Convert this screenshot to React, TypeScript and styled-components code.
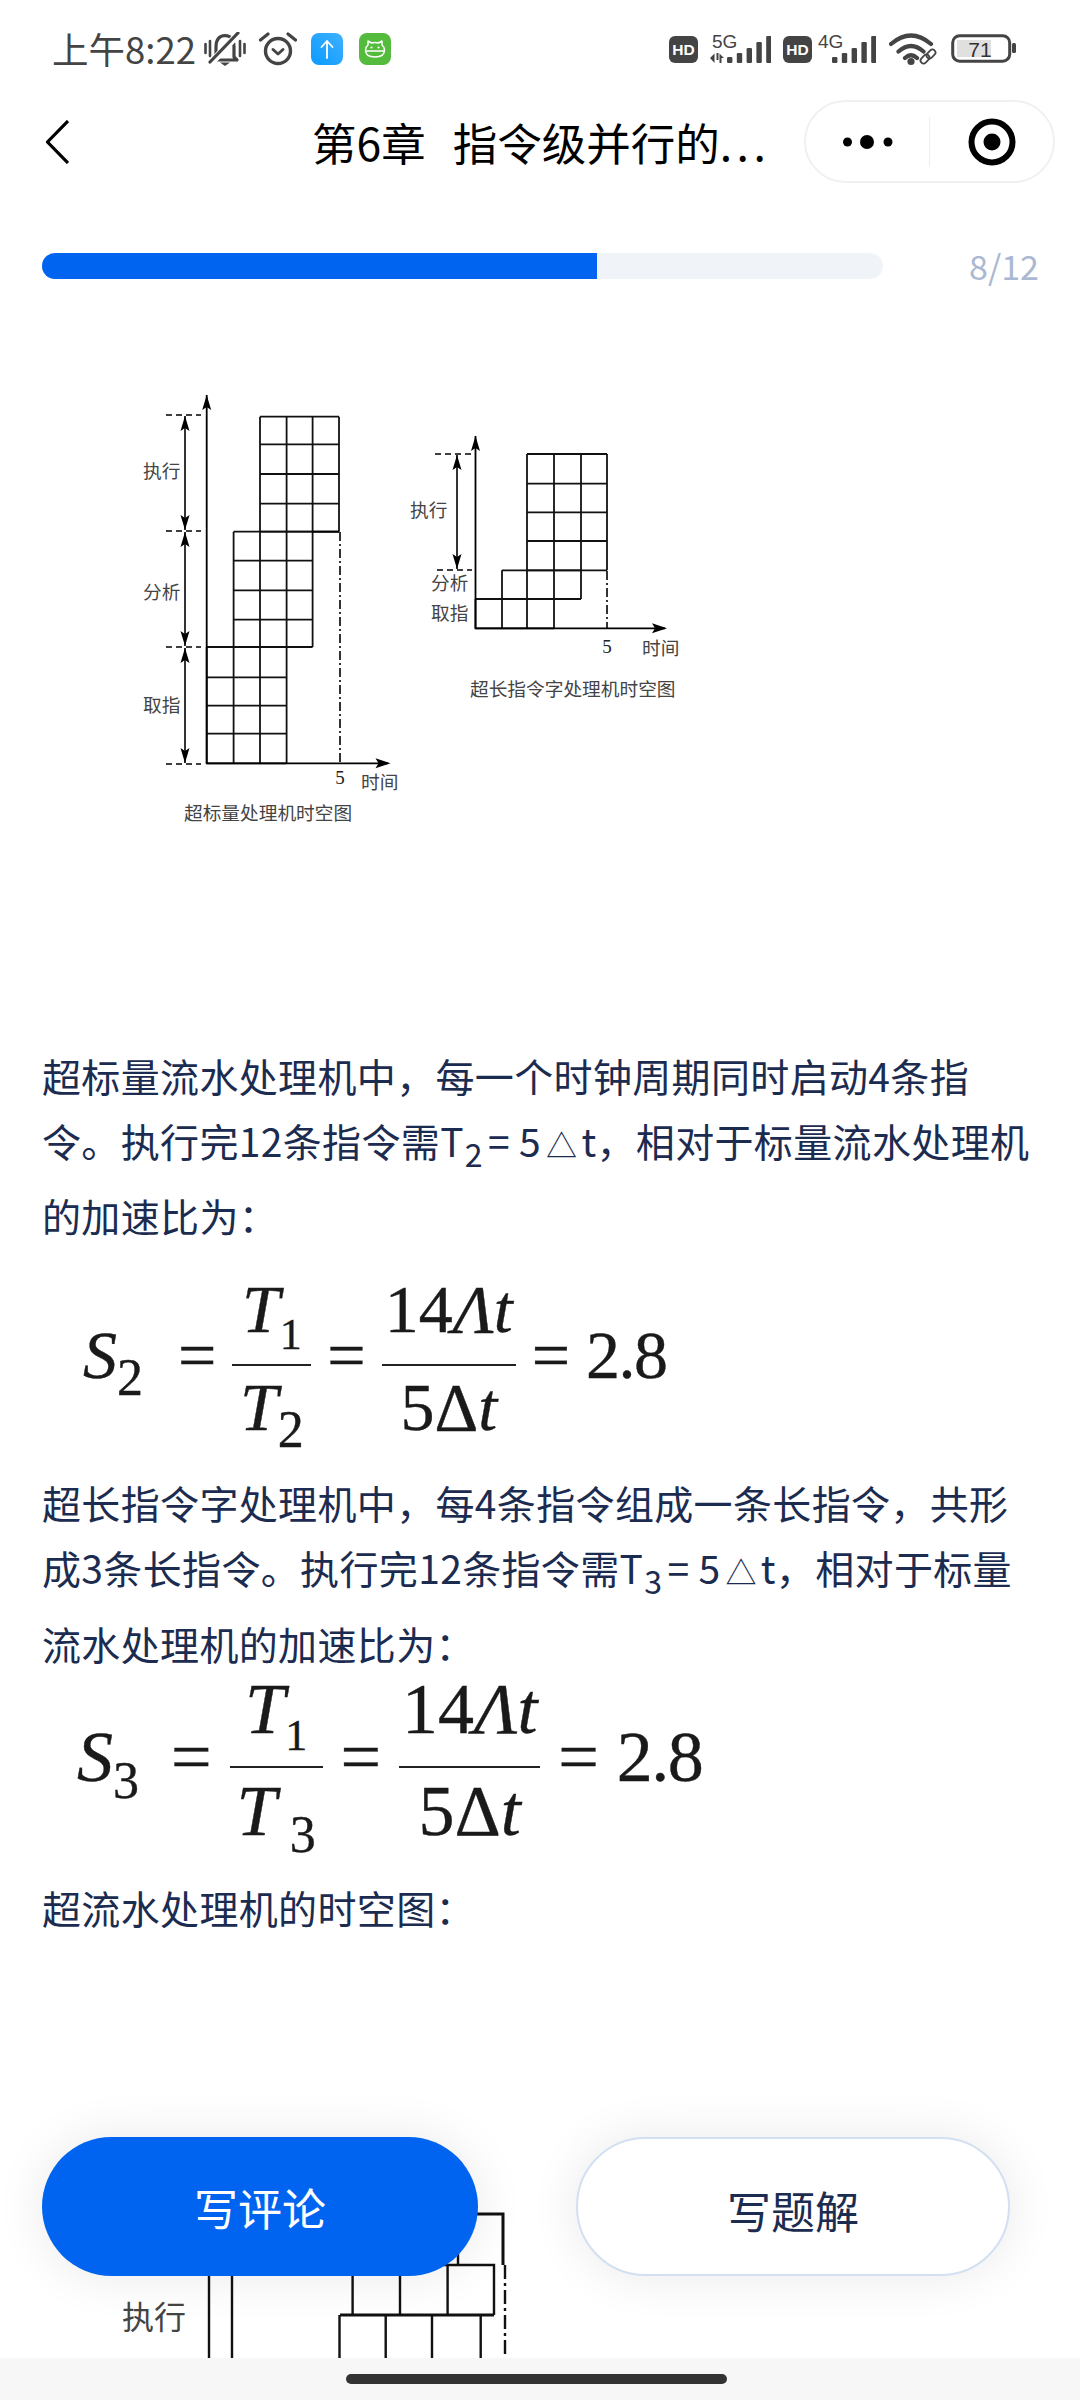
import React from 'react';
import styled, { createGlobalStyle } from 'styled-components';

const cjk = `"Noto Sans CJK SC", "Noto Sans", sans-serif`;
const serif = `"Liberation Serif", "Times New Roman", serif`;

const GlobalStyle = createGlobalStyle`
  html, body { margin: 0; padding: 0; background: #fff; }
  #root { width: 1080px; height: 2400px; overflow: hidden; }
`;

const Page = styled.div`
  position: relative;
  width: 1080px;
  height: 2400px;
  display: flex;
  flex-direction: column;
  background: #fff;
  font-family: ${cjk};
  overflow: hidden;
`;

const StatusBar = styled.div`
  height: 100px;
  flex: none;
  display: flex;
  align-items: center;
  padding: 0 64px 0 52px;
  box-sizing: border-box;
`;

const Time = styled.span`
  font-size: 36.5px;
  line-height: 38px;
  color: #444;
  width: 141px;
  white-space: nowrap;
  margin-top: -2px;
`;

const Slot = styled.span<{ $left?: number; $right?: boolean }>`
  display: flex;
  margin-left: ${(p) => (p.$right ? 'auto' : `${p.$left ?? 0}px`)};
  margin-top: -2px;
`;

const NavBar = styled.div`
  height: 83px;
  flex: none;
  display: flex;
  align-items: center;
  padding-left: 46px;
`;

const NavTitle = styled.div`
  margin-left: 243px;
  width: 492px;
  font-size: 44.5px;
  line-height: 60px;
  color: #000;
  white-space: pre;
  word-spacing: 3.5px;
`;

const Ellipsis = styled.span`
  letter-spacing: 4.5px;
`;

const Capsule = styled.div`
  width: 251px;
  height: 83px;
  box-sizing: border-box;
  border: 2px solid #f0f0f0;
  border-radius: 42px;
  display: flex;
  align-items: center;
  background: #fff;
`;

const CapsuleSide = styled.div`
  flex: 1;
  display: flex;
  justify-content: center;
  align-items: center;
`;

const CapsuleRule = styled.div`
  width: 1px;
  height: 50px;
  background: #eee;
`;

const ProgressRow = styled.div`
  margin-top: 70px;
  padding: 0 41px 0 42px;
  height: 26px;
  flex: none;
  display: flex;
  align-items: center;
  justify-content: space-between;
`;

const Track = styled.div`
  width: 841px;
  height: 26px;
  border-radius: 13px;
  background: #f0f3f7;
  overflow: hidden;
`;

const Fill = styled.div`
  height: 100%;
  background: #0064f0;
`;

const Count = styled.span`
  font-size: 34px;
  color: #aab8d2;
  line-height: 40px;
`;

const Content = styled.div`
  flex: 1;
  min-height: 0;
  overflow: hidden;
  padding: 61px 0 0 42px;
  color: #1c2c50;
`;

const Drawing = styled.svg<{ $top?: number }>`
  display: block;
  margin-top: ${(p) => p.$top ?? 0}px;
`;

const Line = styled.div<{ $below?: number; $top?: number }>`
  font-size: 39px;
  letter-spacing: 0.35px;
  line-height: 65px;
  white-space: pre;
  margin-top: ${(p) => p.$top ?? 0}px;
  margin-bottom: ${(p) => p.$below ?? 0}px;
`;

const Sub = styled.span`
  font-size: 32px;
  line-height: 0;
  vertical-align: -10px;
  margin: 0 5px 0 1px;
`;

const Delta = styled.span`
  font-size: 31px;
  line-height: 0;
  margin: 0 4px 0 5px;
`;

const Formula = styled.div<{ $size: number; $left: number; $top: number; $gap: number }>`
  display: flex;
  align-items: center;
  width: max-content;
  margin-top: ${(p) => p.$top}px;
  margin-left: ${(p) => p.$left}px;
  gap: ${(p) => p.$gap}px;
  color: #1a1a1a;
  font-family: ${serif};
  font-size: ${(p) => p.$size}px;
  line-height: ${(p) => p.$size}px;
  -webkit-text-stroke: 0.4px #1a1a1a;
`;

const Symbol = styled.span`
  padding-bottom: 20px;
  white-space: pre;
`;

const Result = styled(Symbol)`
  letter-spacing: -1.5px;
`;

const Lead = styled(Symbol)<{ $width: number }>`
  width: ${(p) => p.$width}px;
  font-style: italic;
`;

const Fraction = styled.div<{ $width: number }>`
  width: ${(p) => p.$width}px;
  display: flex;
  flex-direction: column;
  align-items: center;
  white-space: nowrap;
`;

const Numerator = styled.div`
  padding-bottom: 21px;
  font-style: italic;
`;

const Denominator = styled.div`
  width: 100%;
  text-align: center;
  border-top: 2px solid #222;
  padding: 7px 0 14px;
  font-style: italic;
`;

const Index = styled.span<{ $size?: number }>`
  font-style: normal;
  font-size: ${(p) => p.$size ?? 52}px;
  line-height: 0;
  vertical-align: -17px;
`;

const Upright = styled.span`
  font-style: normal;
`;

const Actions = styled.div`
  position: absolute;
  left: 42px;
  top: 2137px;
  width: 968px;
  display: flex;
  justify-content: space-between;
`;

const ActionButton = styled.div<{ $primary?: boolean }>`
  width: ${(p) => (p.$primary ? 436 : 434)}px;
  height: 139px;
  box-sizing: border-box;
  border-radius: 70px;
  display: flex;
  align-items: center;
  justify-content: center;
  font-size: 44px;
  background: ${(p) => (p.$primary ? '#0064f0' : '#fff')};
  color: ${(p) => (p.$primary ? '#fff' : '#1c2c50')};
  border: ${(p) => (p.$primary ? 'none' : '2px solid #d2e0f2')};
  box-shadow: 0 0 50px rgba(0, 0, 0, 0.09);
  padding-top: ${(p) => (p.$primary ? 0 : 6)}px;
`;

const HomeBar = styled.div`
  height: 42px;
  flex: none;
  background: #f7f7f7;
  display: flex;
  justify-content: center;
  padding-top: 16px;
  box-sizing: border-box;
  position: relative;
`;

const HomeHandle = styled.div`
  width: 381px;
  height: 10px;
  border-radius: 5px;
  background: #333;
  margin-left: -7px;
`;

const ink = '#444';

const BellOff = () => (
  <svg width="42" height="34" viewBox="0 0 42 34">
    <path d="M12 25 L12 15 Q12 4 21 3.5 Q30 4 30 15 L30 25 L33 28 L9 28 Z" fill="none" stroke={ink} strokeWidth="3.2" strokeLinejoin="round" />
    <path d="M16 30.5 H26 L21 34 Z" fill={ink} />
    <path d="M1.5 12 V21 M6 9 V24 M36 9 V24 M40.5 12 V21" stroke={ink} strokeWidth="2.6" strokeLinecap="round" />
    <path d="M7 31 L34 2" stroke="#fff" strokeWidth="7" />
    <path d="M6 30 L34 1" stroke={ink} strokeWidth="3.2" strokeLinecap="round" />
  </svg>
);

const Alarm = () => (
  <svg width="38" height="34" viewBox="0 0 38 34">
    <circle cx="19" cy="19" r="12.5" fill="none" stroke={ink} strokeWidth="3.4" />
    <path d="M14 17.5 L19 22 L24 17.5" fill="none" stroke={ink} strokeWidth="3" strokeLinecap="round" strokeLinejoin="round" />
    <path d="M1.5 8 L9 2 M36.5 8 L29 2" stroke={ink} strokeWidth="3.2" strokeLinecap="round" />
  </svg>
);

const BlueApp = () => (
  <svg width="32" height="32" viewBox="0 0 32 32">
    <defs>
      <linearGradient id="blueApp" x1="1" y1="0" x2="0" y2="1">
        <stop offset="0" stopColor="#3fb0ff" />
        <stop offset="1" stopColor="#0a9bff" />
      </linearGradient>
    </defs>
    <rect width="32" height="32" rx="8" fill="url(#blueApp)" />
    <path d="M16 25 V8 M10.5 14 L16 8 L21.5 14" fill="none" stroke="#fff" strokeWidth="1.8" strokeLinecap="round" strokeLinejoin="round" />
  </svg>
);

const GreenApp = () => (
  <svg width="32" height="32" viewBox="0 0 32 32">
    <rect width="32" height="32" rx="8" fill="#55bb3d" />
    <path d="M9 12 L9 8 L12.5 10 Q16 9 19.5 10 L23 8 L23 12 Q25.5 14 25.5 17 Q25.5 24 16 24 Q6.5 24 6.5 17 Q6.5 14 9 12 Z M7 18 H25" fill="none" stroke="#fff" strokeWidth="1.5" strokeLinejoin="round" />
    <circle cx="12.5" cy="14.5" r="1.1" fill="#fff" />
    <circle cx="19.5" cy="14.5" r="1.1" fill="#fff" />
  </svg>
);

const HdBadge = () => (
  <svg width="29" height="27" viewBox="0 0 29 27">
    <rect width="29" height="27" rx="6" fill={ink} />
    <text x="14.5" y="19" textAnchor="middle" fontFamily='"Liberation Sans", sans-serif' fontWeight="700" fontSize="15.5" fill="#fff">HD</text>
  </svg>
);

const Bars = ({ x }: { x: number }) => (
  <g fill={ink}>
    {[6, 10, 15, 21, 27].map((h, i) => (
      <rect key={h} x={x + i * 9.8} y={30 - h} width="5.4" height={h} rx="1.2" />
    ))}
  </g>
);

const Signal = ({ label, width, barsAt, arrows }: { label: string; width: number; barsAt: number; arrows?: boolean }) => (
  <svg width={width} height="38" viewBox={`0 -3 ${width} 38`}>
    <text x={arrows ? 2 : 0} y="15" fontFamily='"Liberation Sans", sans-serif' fontSize="19" fill={ink}>{label}</text>
    {arrows && <path d="M0 25 L4.5 20.5 V30 Z M6.5 20 H8.5 V27 H6.5 Z M9.5 20.5 L14 25 H11.5 V30 H9.5 Z" fill={ink} />}
    <Bars x={barsAt} />
  </svg>
);

const Wifi = () => (
  <svg width="48" height="34" viewBox="0 0 48 34">
    <path d="M2 12 Q22 -5 42 12 M9.5 19.5 Q22 8.5 34.5 19.5 M16 26 Q22 20.5 28 26" fill="none" stroke={ink} strokeWidth="4.2" strokeLinecap="round" />
    <circle cx="22" cy="29.5" r="3.6" fill={ink} />
    <g fill="none" stroke={ink} strokeWidth="1.8">
      <rect x="31" y="24" width="10" height="6" rx="3" transform="rotate(-45 36 27)" />
      <rect x="37" y="19" width="10" height="6" rx="3" transform="rotate(-45 42 22)" />
    </g>
  </svg>
);

const Battery = () => (
  <svg width="65" height="30" viewBox="0 0 65 30">
    <rect x="1.7" y="1.7" width="57" height="25.5" rx="7" fill="none" stroke={ink} strokeWidth="3" />
    <rect x="6" y="6" width="34" height="17" fill="#e0e0e0" />
    <text x="29" y="22.5" textAnchor="middle" fontFamily='"Liberation Sans", sans-serif' fontSize="21" fill="#333">71</text>
    <rect x="61" y="9" width="4" height="10" rx="1.5" fill={ink} />
  </svg>
);

const ChevronLeft = () => (
  <svg width="23" height="44" viewBox="0 0 23 44">
    <path d="M22 1 L1.5 22 L22 43" fill="none" stroke="#000" strokeWidth="3.2" />
  </svg>
);

const MoreDots = () => (
  <svg width="50" height="16" viewBox="0 0 50 16">
    <circle cx="4.5" cy="8" r="4.5" fill="#000" />
    <circle cx="24" cy="8" r="7" fill="#000" />
    <circle cx="45" cy="8" r="4.5" fill="#000" />
  </svg>
);

const Target = () => (
  <svg width="48" height="48" viewBox="0 0 48 48">
    <circle cx="24" cy="24" r="20.5" fill="none" stroke="#000" strokeWidth="6" />
    <circle cx="24" cy="24" r="8.5" fill="#000" />
  </svg>
);

// one block of cells in a space-time diagram
const Cells = ({ xs, ys }: { xs: number[]; ys: number[] }) => (
  <g stroke="#111" strokeWidth="1.8" fill="none">
    {xs.map((x) => <path key={`v${x}`} d={`M${x} ${ys[0]} V${ys[ys.length - 1]}`} />)}
    {ys.map((y) => <path key={`h${y}`} d={`M${xs[0]} ${y} H${xs[xs.length - 1]}`} />)}
  </g>
);

const UpHead = ({ x, y }: { x: number; y: number }) => <path d={`M${x} ${y} l-4.5 15 l4.5 -3 l4.5 3 z`} fill="#000" />;
const DownHead = ({ x, y }: { x: number; y: number }) => <path d={`M${x} ${y} l-4.5 -15 l4.5 3 l4.5 -3 z`} fill="#000" />;
const RightHead = ({ x, y }: { x: number; y: number }) => <path d={`M${x} ${y} l-15 -5 l3 5 l-3 5 z`} fill="#000" />;

const Span = ({ x, from, to }: { x: number; from: number; to: number }) => (
  <g>
    <path d={`M${x} ${from} V${to}`} stroke="#000" strokeWidth="1.6" />
    <UpHead x={x} y={from} />
    <DownHead x={x} y={to} />
  </g>
);

const Dash = ({ y, from, to }: { y: number; from: number; to: number }) => (
  <path d={`M${from} ${y} H${to}`} stroke="#000" strokeWidth="1.6" strokeDasharray="6 4" />
);

const Note = ({ x, y, children }: { x: number; y: number; children: React.ReactNode }) => (
  <text x={x} y={y} fontFamily={cjk} fontSize="18.7" fill="#444">{children}</text>
);

const Digit = ({ x, y }: { x: number; y: number }) => (
  <text x={x} y={y} textAnchor="middle" fontFamily={serif} fontSize="19" fill="#222">5</text>
);

const TopFigures = () => (
  <Drawing width="996" height="500" viewBox="42 340 996 500">
    {/* superscalar */}
    <Cells xs={[260, 286.6, 312.6, 339]} ys={[416.7, 444.3, 474, 503.7, 531.7]} />
    <Cells xs={[233.6, 260, 286.6, 312.6]} ys={[531.7, 560.7, 590.3, 619.7, 647]} />
    <Cells xs={[206.7, 233.6, 260, 286.6]} ys={[647, 677.3, 705.7, 733.7, 763.3]} />
    <path d="M206.7 395 V763.3 H388" stroke="#000" strokeWidth="1.8" fill="none" />
    <path d="M312.6 531.7 H339" stroke="#000" strokeWidth="2" />
    <UpHead x={206.7} y={395} />
    <RightHead x={390.5} y={763.3} />
    <path d="M340 532 V763" stroke="#000" strokeWidth="1.6" strokeDasharray="9 3 2 3" />
    {[415, 531, 647, 764].map((y) => <Dash key={y} y={y} from={166} to={201} />)}
    <Span x={185} from={416} to={530} />
    <Span x={185} from={532} to={646} />
    <Span x={185} from={648} to={763} />
    <Note x={143} y={478}>执行</Note>
    <Note x={143} y={599}>分析</Note>
    <Note x={143} y={712}>取指</Note>
    <Digit x={340} y={784} />
    <Note x={361} y={789}>时间</Note>
    <Note x={184} y={820}>超标量处理机时空图</Note>

    {/* very long instruction word */}
    <Cells xs={[527, 554, 581, 607]} ys={[454, 483.7, 512.3, 541, 570.3]} />
    <Cells xs={[502, 527, 554, 581]} ys={[570.3, 599]} />
    <Cells xs={[475.5, 502, 527, 554]} ys={[599, 628.3]} />
    <path d="M475.5 436 V628.3 H665" stroke="#000" strokeWidth="1.8" fill="none" />
    <UpHead x={475.5} y={436} />
    <RightHead x={667} y={628.3} />
    <path d="M607 571 V628" stroke="#000" strokeWidth="1.6" strokeDasharray="9 3 2 3" />
    <Dash y={454} from={435} to={471} />
    <Dash y={570} from={437} to={472} />
    <Span x={457} from={455} to={569} />
    <Note x={410} y={517}>执行</Note>
    <Note x={431} y={590}>分析</Note>
    <Note x={431} y={620}>取指</Note>
    <Digit x={607} y={653} />
    <Note x={642} y={655}>时间</Note>
    <Note x={470} y={696}>超长指令字处理机时空图</Note>
  </Drawing>
);

const BottomFigure = () => (
  <Drawing $top={260} width="996" height="158" viewBox="42 2200 996 158">
    <path d="M209 2200 V2358 M232 2200 V2358" stroke="#111" strokeWidth="2.4" />
    <text x="122" y="2329" fontFamily={cjk} fontSize="32" fill="#444">执行</text>
    <g stroke="#111" strokeWidth="2.4" fill="none">
      <path d="M458 2214 H503 V2265" strokeWidth="3" />
      <path d="M458 2214 V2265" />
      <path d="M352.6 2265 H494 V2315" />
      <path d="M352.6 2265 V2315 M400 2265 V2315 M447.6 2265 V2315" />
      <path d="M340 2315 H494" strokeWidth="3" />
      <path d="M339.5 2315 V2358 M385.7 2315 V2358 M432 2315 V2358 M480.7 2315 V2358" />
    </g>
    <path d="M505 2265 V2358" stroke="#111" strokeWidth="2.4" strokeDasharray="14 4 3 4" />
  </Drawing>
);

export default function App() {
  return (
    <Page>
      <GlobalStyle />
      <StatusBar>
        <Time>上午8:22</Time>
        <Slot $left={11}><BellOff /></Slot>
        <Slot $left={13}><Alarm /></Slot>
        <Slot $left={14}><BlueApp /></Slot>
        <Slot $left={16}><GreenApp /></Slot>
        <Slot $right><HdBadge /></Slot>
        <Slot $left={12}><Signal label="5G" width={61} barsAt={17} arrows /></Slot>
        <Slot $left={12}><HdBadge /></Slot>
        <Slot $left={6}><Signal label="4G" width={58} barsAt={14} /></Slot>
        <Slot $left={13}><Wifi /></Slot>
        <Slot $left={14}><Battery /></Slot>
      </StatusBar>

      <NavBar>
        <ChevronLeft />
        <NavTitle>第6章  指令级并行的<Ellipsis>...</Ellipsis></NavTitle>
        <Capsule>
          <CapsuleSide><MoreDots /></CapsuleSide>
          <CapsuleRule />
          <CapsuleSide><Target /></CapsuleSide>
        </Capsule>
      </NavBar>

      <ProgressRow>
        <Track><Fill style={{ width: `${(555 / 841) * 100}%` }} /></Track>
        <Count>8/12</Count>
      </ProgressRow>

      <Content>
        <TopFigures />

        <Line $top={203}>超标量流水处理机中，每一个时钟周期同时启动4条指</Line>
        <Line $below={10}>令。执行完12条指令需T<Sub>2</Sub>= 5<Delta>△</Delta>t，相对于标量流水处理机</Line>
        <Line>的加速比为：</Line>

        <Formula $size={68} $left={41} $top={27} $gap={16}>
          <Lead $width={79}>S<Index>2</Index></Lead>
          <Symbol>=</Symbol>
          <Fraction $width={79}>
            <Numerator>T<Index $size={44}>1</Index></Numerator>
            <Denominator>T<Index>2</Index></Denominator>
          </Fraction>
          <Symbol>=</Symbol>
          <Fraction $width={134}>
            <Numerator><Upright>14</Upright>Λt</Numerator>
            <Denominator><Upright>5Δ</Upright>t</Denominator>
          </Fraction>
          <Symbol>=</Symbol>
          <Result>2.8</Result>
        </Formula>

        <Line $top={15}>超长指令字处理机中，每4条指令组成一条长指令，共形</Line>
        <Line $below={11}>成3条长指令。执行完12条指令需T<Sub>3</Sub>= 5<Delta>△</Delta>t，相对于标量</Line>
        <Line>流水处理机的加速比为：</Line>

        <Formula $size={72} $left={35} $top={-3} $gap={18}>
          <Lead $width={76}>S<Index>3</Index></Lead>
          <Symbol>=</Symbol>
          <Fraction $width={93}>
            <Numerator>T<Index $size={44}>1</Index></Numerator>
            <Denominator>T<Index>&nbsp;3</Index></Denominator>
          </Fraction>
          <Symbol>=</Symbol>
          <Fraction $width={141}>
            <Numerator><Upright>14</Upright>Λt</Numerator>
            <Denominator><Upright>5Δ</Upright>t</Denominator>
          </Fraction>
          <Symbol>=</Symbol>
          <Result>2.8</Result>
        </Formula>

        <Line $top={14}>超流水处理机的时空图：</Line>

        <BottomFigure />
      </Content>

      <HomeBar><HomeHandle /></HomeBar>

      <Actions>
        <ActionButton $primary>写评论</ActionButton>
        <ActionButton>写题解</ActionButton>
      </Actions>
    </Page>
  );
}
